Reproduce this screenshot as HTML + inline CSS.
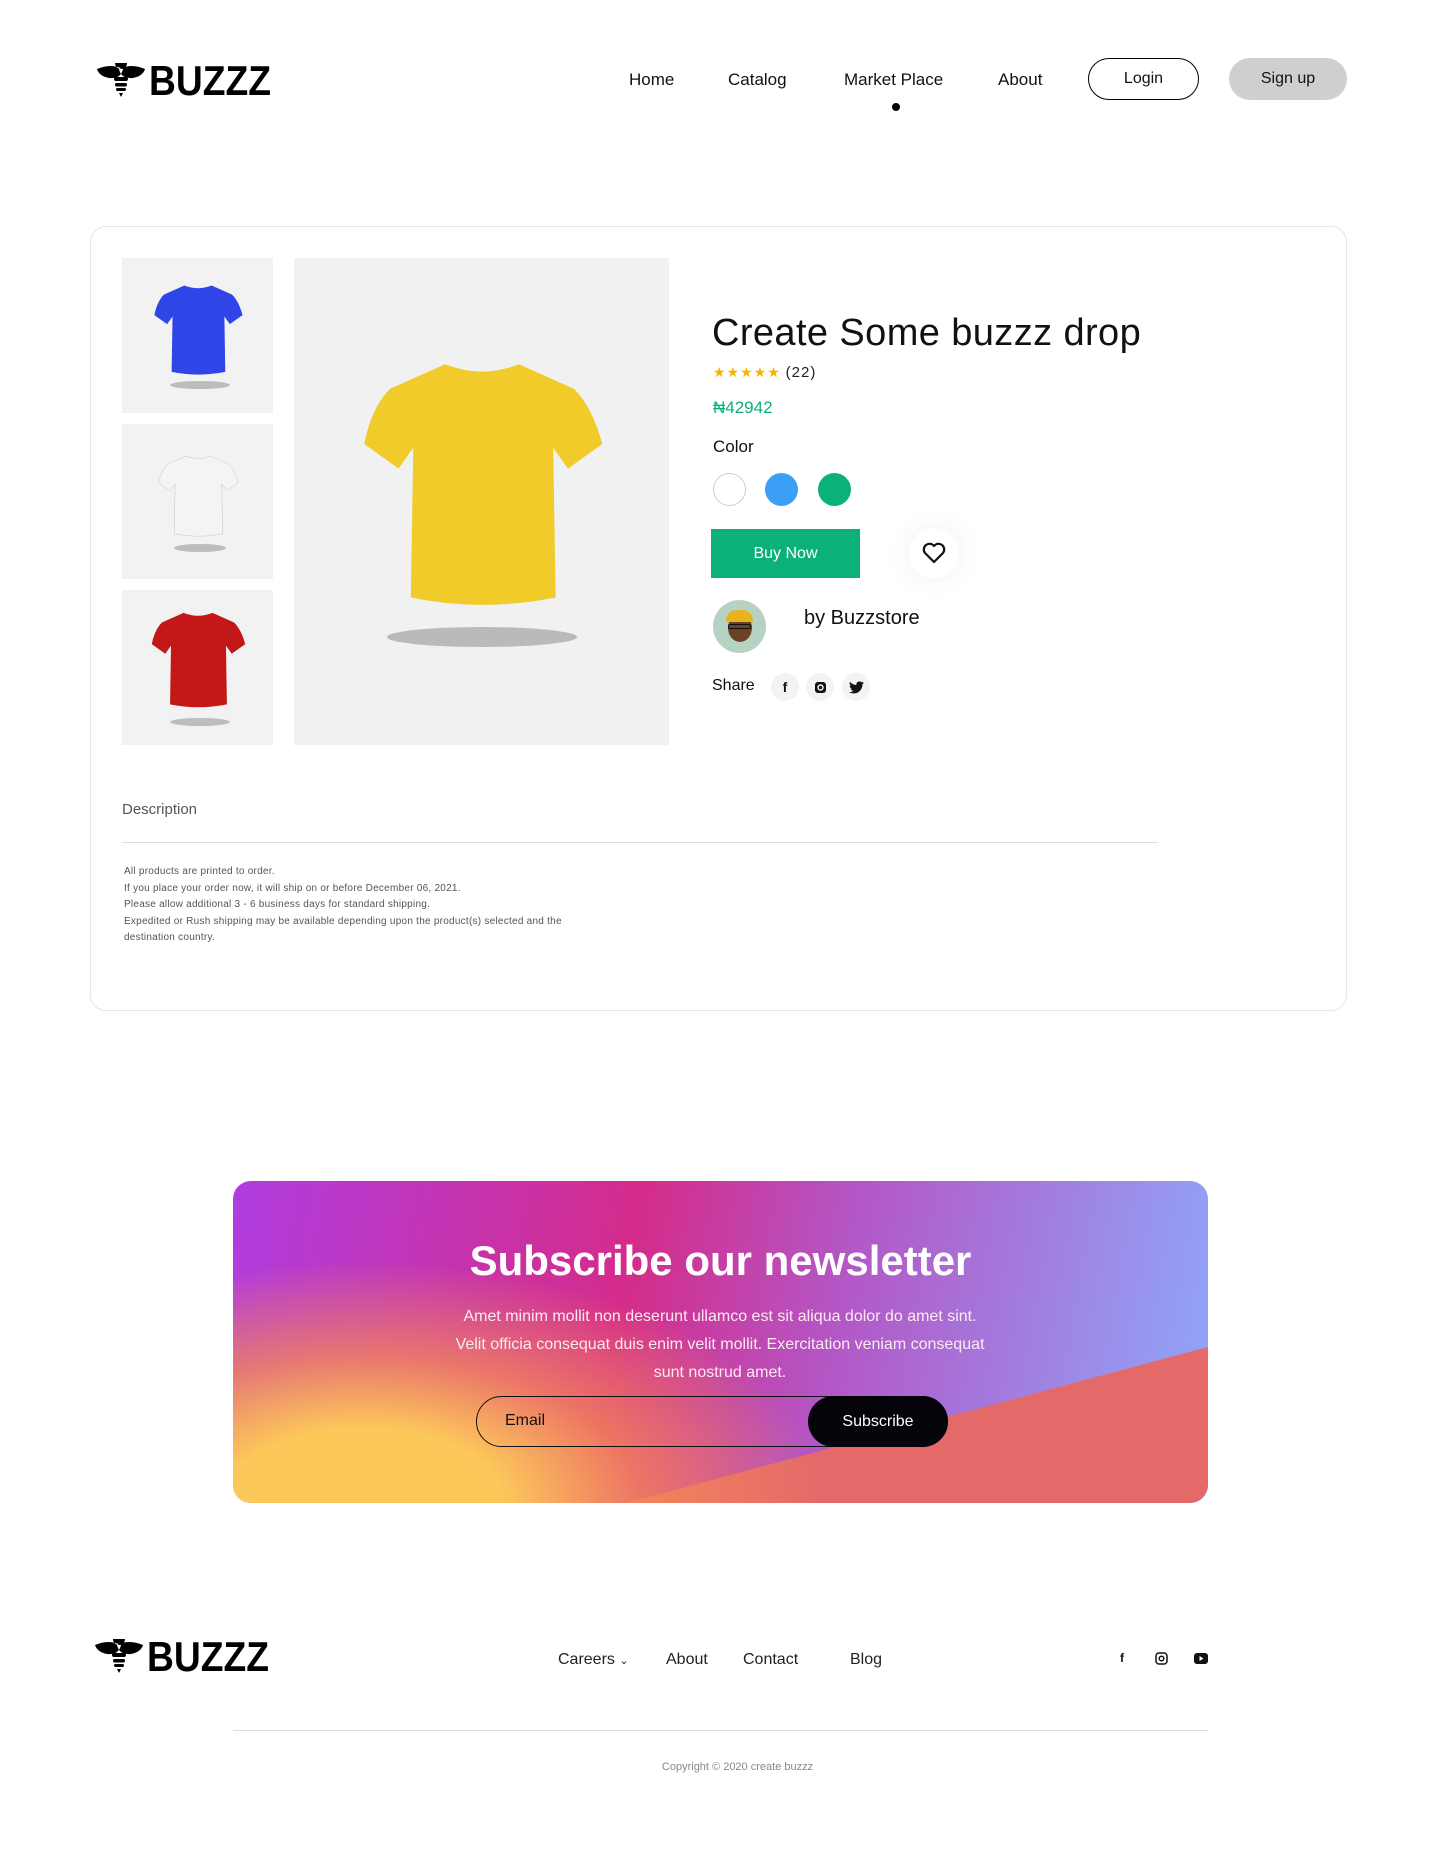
<!DOCTYPE html>
<html><head><meta charset="utf-8"><style>
*{margin:0;padding:0;box-sizing:border-box}
body{width:1440px;height:1860px;background:#fff;font-family:"Liberation Sans",sans-serif;color:#111;position:relative;overflow:hidden}
.a{position:absolute}
.nav{font-size:17px;top:70px}
.btn{border-radius:22px;font-size:16px;display:flex;align-items:center;justify-content:center}
.card{left:90px;top:226px;width:1257px;height:785px;border:1px solid #e6e6e6;border-radius:16px}
.thumb{background:#f2f2f2;left:122px;width:151px;height:155px;display:flex;align-items:center;justify-content:center}
.sw{width:33px;height:33px;border-radius:50%;top:473px}
.si{width:28px;height:28px;border-radius:50%;background:#f3f3f3;top:673px;display:flex;align-items:center;justify-content:center}
.desc{left:124px;top:864px;font-size:10px;line-height:16.5px;color:#555;letter-spacing:.25px}
.fn{top:1651px;font-size:16px;color:#222}
</style></head><body>
<svg width="0" height="0" style="position:absolute"><defs>
<symbol id="tee" viewBox="0 0 200 220"><path d="M70 10 Q100 22 130 10 L175 30 Q190 45 198 75 L170 95 L158 78 L160 200 Q100 212 42 200 L44 78 L32 95 L4 75 Q10 45 25 30 Z"/></symbol>
<symbol id="logo" viewBox="0 0 175 36"><path d="M0 8 Q14 2 26 8 Q24 18 12 17 Q2 15 0 8Z M48 8 Q34 2 22 8 Q24 18 36 17 Q46 15 48 8Z M18 2 a6 6 0 1 0 12 0Z" fill="#000"/><rect x="17" y="16" width="14" height="4" rx="2"/><rect x="18" y="22" width="12" height="3.5" rx="1.7"/><rect x="19" y="27" width="10" height="3" rx="1.5"/><path d="M22 32 L26 32 L24 36Z"/><text x="52" y="34" font-family="Liberation Sans Narrow, Liberation Sans" font-weight="bold" font-size="42" textLength="122" lengthAdjust="spacingAndGlyphs">BUZZZ</text></symbol>
</defs></svg>

<svg class="a" style="left:97px;top:60px" width="175" height="38"><use href="#logo"/></svg>
<div class="a nav" style="left:629px">Home</div>
<div class="a nav" style="left:728px">Catalog</div>
<div class="a nav" style="left:844px">Market Place</div>
<div class="a" style="left:892px;top:103px;width:8px;height:8px;border-radius:50%;background:#000"></div>
<div class="a nav" style="left:998px">About</div>
<div class="a btn" style="left:1088px;top:58px;width:111px;height:42px;border:1.5px solid #000">Login</div>
<div class="a btn" style="left:1229px;top:58px;width:118px;height:42px;background:#cfcfcf">Sign up</div>

<div class="a card"></div>
<div class="a thumb" style="top:258px"><svg width="100" height="110"><ellipse cx="52" cy="104" rx="30" ry="4" fill="#888" opacity=".5"/><svg width="100" height="100" fill="#2f45e8"><use href="#tee"/></svg></svg></div>
<div class="a thumb" style="top:424px"><svg width="90" height="100"><ellipse cx="47" cy="96" rx="26" ry="4" fill="#888" opacity=".5"/><svg width="90" height="90" fill="#f4f4f4" stroke="#bbb"><use href="#tee"/></svg></svg></div>
<div class="a thumb" style="top:590px"><svg width="110" height="120"><ellipse cx="57" cy="114" rx="30" ry="4" fill="#888" opacity=".5"/><svg width="110" height="106" fill="#c41818"><use href="#tee"/></svg></svg></div>
<div class="a" style="left:294px;top:258px;width:375px;height:487px;background:#f1f1f1;display:flex;align-items:center;justify-content:center"><svg width="260" height="300"><ellipse cx="130" cy="285" rx="95" ry="10" fill="#777" opacity=".45"/><svg width="260" height="270" fill="#f0cb2a"><use href="#tee"/></svg></svg></div>

<div class="a" style="left:712px;top:312px;font-size:38px;letter-spacing:.4px">Create Some buzzz drop</div>
<div class="a" style="left:713px;top:364px;font-size:14px;color:#f5b400;letter-spacing:1px">★★★★★ <span style="color:#222;font-size:15px">(22)</span></div>
<div class="a" style="left:713px;top:398px;font-size:17px;color:#0bb07b">₦42942</div>
<div class="a" style="left:713px;top:437px;font-size:17px">Color</div>
<div class="a sw" style="left:713px;border:1px solid #ccc"></div>
<div class="a sw" style="left:765px;background:#3a9ff5"></div>
<div class="a sw" style="left:818px;background:#0bb07b"></div>
<div class="a btn" style="left:711px;top:529px;width:149px;height:49px;border-radius:0;background:#0bb07b;color:#fff;font-size:16px">Buy Now</div>
<div class="a" style="left:909px;top:528px;width:50px;height:50px;border-radius:50%;background:#fff;box-shadow:0 0 24px rgba(120,130,200,.12);display:flex;align-items:center;justify-content:center"><svg width="24" height="22" viewBox="0 0 24 22"><path d="M12 20 L3 11 A5 5 0 0 1 12 4 A5 5 0 0 1 21 11Z" fill="none" stroke="#111" stroke-width="2.2" stroke-linejoin="round"/></svg></div>
<div class="a" style="left:713px;top:600px;width:53px;height:53px;border-radius:50%;background:#b6d2c2;overflow:hidden"><div class="a" style="left:15px;top:14px;width:24px;height:28px;border-radius:50%;background:#6b4226"></div><div class="a" style="left:13px;top:10px;width:27px;height:12px;border-radius:12px 12px 2px 2px;background:#e9b21f"></div><div class="a" style="left:15px;top:24px;width:23px;height:5px;border:1.5px solid #111;border-radius:2px"></div></div>
<div class="a" style="left:804px;top:607px;font-size:20px">by Buzzstore</div>
<div class="a" style="left:712px;top:677px;font-size:16px">Share</div>
<div class="a si" style="left:771px"><span style="font-weight:bold;font-size:14px">f</span></div>
<div class="a si" style="left:806px"><svg width="13" height="13" viewBox="0 0 13 13"><rect x="1" y="1" width="11" height="11" rx="3" fill="#111"/><circle cx="6.5" cy="6.5" r="2.5" fill="none" stroke="#f3f3f3" stroke-width="1.5"/></svg></div>
<div class="a si" style="left:842px"><svg width="15" height="13" viewBox="0 0 24 20"><path d="M24 2.4a10 10 0 0 1-2.8.8A5 5 0 0 0 23.3.4a10 10 0 0 1-3.1 1.2A5 5 0 0 0 11.8 6 14 14 0 0 1 1.7.9a5 5 0 0 0 1.5 6.6A5 5 0 0 1 1 6.9a5 5 0 0 0 3.9 4.8 5 5 0 0 1-2.2.1 5 5 0 0 0 4.6 3.4A10 10 0 0 1 0 17.3 14 14 0 0 0 7.5 19.5c9 0 14-7.5 14-14v-.6A10 10 0 0 0 24 2.4z" fill="#111"/></svg></div>

<div class="a" style="left:122px;top:801px;font-size:15px;color:#555">Description</div>
<div class="a" style="left:122px;top:842px;width:1036px;height:1px;background:#ddd"></div>
<div class="a desc">All products are printed to order.<br>If you place your order now, it will ship on or before December 06, 2021.<br>Please allow additional 3 - 6 business days for standard shipping.<br>Expedited or Rush shipping may be available depending upon the product(s) selected and the<br>destination country.</div>

<div class="a" style="left:233px;top:1181px;width:975px;height:322px;border-radius:18px;overflow:hidden;background:linear-gradient(100deg,#b03de0 0%,#d42c8a 40%,#b455c4 60%,#8ea9fb 100%)">
<div class="a" style="left:0;top:0;width:975px;height:322px;background:#e46a6a;clip-path:polygon(975px 166px,975px 322px,393px 322px)"></div>
<div class="a" style="left:0;top:0;width:975px;height:322px;background:radial-gradient(ellipse 460px 240px at 130px 320px,#fdc85a 30%,rgba(246,140,85,.75) 60%,rgba(240,100,100,0) 100%)"></div>
</div>
<div class="a" style="left:233px;top:1237px;width:975px;text-align:center;color:#fff;font-size:42px;font-weight:bold">Subscribe our newsletter</div>
<div class="a" style="left:452px;top:1303px;width:536px;text-align:center;color:#fde9f1;font-size:16px;line-height:28px">Amet minim mollit non deserunt ullamco est sit aliqua dolor do amet sint. Velit officia consequat duis enim velit mollit. Exercitation veniam consequat sunt nostrud amet.</div>
<div class="a" style="left:476px;top:1396px;width:472px;height:51px;border:1.5px solid #111;border-radius:26px"></div>
<div class="a" style="left:505px;top:1412px;font-size:16px">Email</div>
<div class="a btn" style="left:808px;top:1396px;width:140px;height:51px;border-radius:26px;background:#05040a;color:#fff">Subscribe</div>

<svg class="a" style="left:95px;top:1636px" width="175" height="38"><use href="#logo"/></svg>
<div class="a fn" style="left:558px">Careers <span style="font-size:11px">⌄</span></div>
<div class="a fn" style="left:666px">About</div>
<div class="a fn" style="left:743px">Contact</div>
<div class="a fn" style="left:850px">Blog</div>
<div class="a" style="left:1120px;top:1651px;font-size:12px;font-weight:bold">f</div>
<svg class="a" style="left:1155px;top:1652px" width="13" height="13" viewBox="0 0 13 13"><rect x="1" y="1" width="11" height="11" rx="3" fill="none" stroke="#111" stroke-width="1.5"/><circle cx="6.5" cy="6.5" r="2.3" fill="none" stroke="#111" stroke-width="1.5"/></svg>
<svg class="a" style="left:1194px;top:1653px" width="14" height="11" viewBox="0 0 14 11"><rect x="0" y="0" width="14" height="11" rx="3" fill="#111"/><path d="M5.5 3 L9.5 5.5 L5.5 8Z" fill="#fff"/></svg>
<div class="a" style="left:233px;top:1730px;width:975px;height:1px;background:#ddd"></div>
<div class="a" style="left:233px;top:1761px;width:1009px;text-align:center;font-size:11px;color:#888">Copyright © 2020 create buzzz</div>
</body></html>
